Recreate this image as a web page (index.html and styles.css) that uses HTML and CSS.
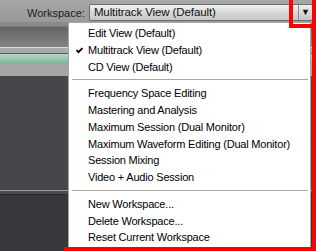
FILE: index.html
```html
<!DOCTYPE html>
<html lang="en">
<head>
  <meta charset="UTF-8" />
  <title>Workspace menu</title>
  <link rel="stylesheet" href="styles.css">
</head>
<body>

  <div class="app">

    <div class="topbar">
      <span class="label">Workspace:</span>
      <div class="select">
        <span class="select-text">Multitrack View (Default)</span>
        <span class="select-arrow">&#9660;</span>
      </div>
    </div>

    <div class="toolbar"></div>
    <div class="rule"></div>
    <div class="strip"></div>
    <div class="teal"></div>
    <div class="gray"></div>
    <div class="panel"></div>
    <div class="panel-edge"></div>
    <div class="panel-bottom"></div>

    <ul class="menu">
      <li>Edit View (Default)</li>
      <li class="checked">
        <svg class="check" width="7" height="7" viewBox="0 0 7 7">
          <path d="M0.5 3 L2.5 5.2 L6.5 1" fill="none" stroke="#000" stroke-width="1.8"/>
        </svg>
        Multitrack View (Default)
      </li>
      <li>CD View (Default)</li>
      <li class="sep"></li>
      <li>Frequency Space Editing</li>
      <li>Mastering and Analysis</li>
      <li>Maximum Session (Dual Monitor)</li>
      <li>Maximum Waveform Editing (Dual Monitor)</li>
      <li>Session Mixing</li>
      <li>Video + Audio Session</li>
      <li class="sep"></li>
      <li>New Workspace...</li>
      <li>Delete Workspace...</li>
      <li>Reset Current Workspace</li>
    </ul>

    <!-- annotation marks -->
    <div class="mark-arrow"></div>
    <div class="mark-menu"></div>

  </div>

</body>
</html>
```

FILE: styles.css
```css
body {
  margin: 0;
  font-family: 'Liberation Sans', Arial, sans-serif;
  font-size: 11px;
  color: #000;
}

.app {
  position: relative;
  width: 316px;
  height: 251px;
  overflow: hidden;
  background: #37383c;
}

.topbar {
  display: flex;
  align-items: center;
  height: 22px;
  padding-left: 27px;
  background: linear-gradient(#a6a6a6, #999);
}

.label {
  color: #1c1c1c;
  margin-right: 4px;
  margin-top: 3px;
}

.select {
  display: flex;
  align-items: center;
  width: 222px;
  height: 15px;
  margin-top: 2px;
  border: 1px solid #6e6e6e;
  border-radius: 2px;
  background: linear-gradient(#f2f2f2, #d8d8d8 50%, #c6c6c6);
}

.select-text {
  flex: 1;
  padding-left: 4px;
  font-size: 11.5px;
  letter-spacing: -0.1px;
  color: #111;
}

.select-arrow {
  width: 13px;
  height: 15px;
  border-left: 1px solid #8a8a8a;
  font-size: 9px;
  line-height: 15px;
  text-align: center;
  color: #111;
}

.toolbar {
  height: 25px;
  background: linear-gradient(#8a8a8a 0, #8a8a8a 4px, #646464 5px, #838383);
}

.rule {
  height: 1px;
  background: #dcdcdc;
}

.strip {
  height: 5px;
  background: #a9a9a9;
  border-bottom: 1px solid #595959;
}

.teal {
  height: 10px;
  background: linear-gradient(#b3d9c9, #7eb39c);
}

.gray {
  height: 12px;
  background: #a6a6a6;
}

.panel {
  height: 114px;
  background: #45474b;
}

.panel-edge {
  height: 3px;
  background: #4b4c50;
  border-top: 1px solid #9a9a9a;
  border-bottom: 1px solid #27282a;
}

.panel-bottom {
  height: 60px;
  background: #37383c;
}

.menu {
  position: absolute;
  left: 68px;
  top: 22px;
  width: 243px;
  height: 226px;
  margin: 0;
  padding: 2px 0 0;
  list-style: none;
  background: #fff;
  border: 1px solid #aca899;
  box-sizing: border-box;
}

.menu li {
  position: relative;
  height: 16.75px;
  line-height: 16.75px;
  padding-left: 19px;
  letter-spacing: -0.2px;
  white-space: nowrap;
}

.menu li.sep {
  height: 1px;
  margin: 4px 2px 5px 3px;
  padding: 0;
  background: #aca899;
}

.check {
  position: absolute;
  left: 7px;
  top: 5px;
}

.mark-arrow {
  position: absolute;
  left: 289px;
  top: -4px;
  width: 19px;
  height: 24px;
  border: 4px solid #f00;
}

.mark-menu {
  position: absolute;
  left: 64px;
  top: 28px;
  right: 0;
  bottom: 0;
  border-right: 4px solid #f00;
  border-bottom: 4px solid #f00;
}
```
